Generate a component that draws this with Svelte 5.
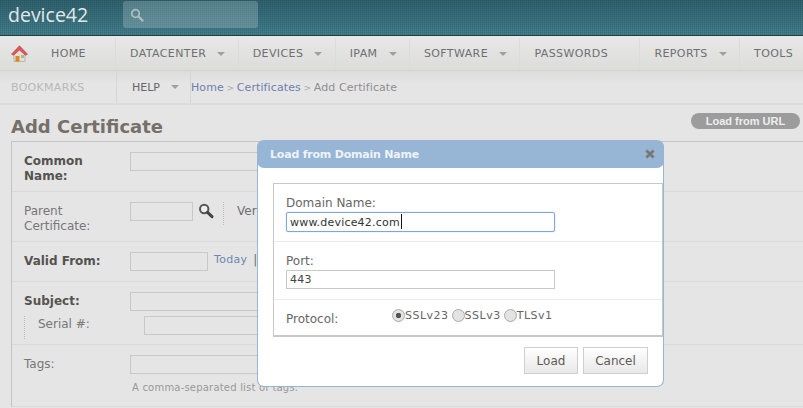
<script>
  const navItems = [
    { label: 'DATACENTER', caret: true },
    { label: 'DEVICES', caret: true },
    { label: 'IPAM', caret: true },
    { label: 'SOFTWARE', caret: true },
    { label: 'PASSWORDS', caret: false },
    { label: 'REPORTS', caret: true },
    { label: 'TOOLS', caret: false }
  ];
  const protocols = ['SSLv23', 'SSLv3', 'TLSv1'];
  let domain = $state('www.device42.com');
  let port = $state('443');
  let protocol = $state('SSLv23');
</script>

<div class="page">
  <header class="topbar">
    <span class="logo">device42</span>
    <div class="search">
      <svg width="14" height="14" viewBox="0 0 14 14">
        <circle cx="5.5" cy="5.5" r="3.8" fill="none" stroke="#a9bcc0" stroke-width="1.8" />
        <path d="M8.4 8.4 L12.6 12.6" stroke="#a9bcc0" stroke-width="2.2" stroke-linecap="round" />
      </svg>
    </div>
  </header>

  <nav class="mainnav">
    <a class="nav-item home">
      <svg class="house" width="17" height="18" viewBox="0 0 17 18">
        <path d="M3 8 V16.5 H14 V8 L8.5 3 Z" fill="#e4e0d6" stroke="#a8a294" stroke-width="0.7" />
        <path d="M0.5 9.2 L8.5 0.8 L16.5 9.2 L14.4 10.2 L8.5 5 L2.6 10.2 Z" fill="#d9565a" stroke="#c0484c" stroke-width="0.7" />
        <rect x="4.5" y="11" width="4" height="5.5" fill="#d98a1e" />
        <rect x="10" y="10" width="3" height="3" fill="#a9b4b4" />
      </svg>
      <span>HOME</span>
      <i class="caret hidden"></i>
    </a>
    {#each navItems as item}
      <a class="nav-item">
        <span>{item.label}</span>
        <i class="caret" class:hidden={!item.caret}></i>
      </a>
    {/each}
  </nav>

  <div class="subnav">
    <a class="sub-item bookmarks">BOOKMARKS</a>
    <a class="sub-item help">HELP <i class="caret"></i></a>
    <div class="crumbs">
      <a>Home</a> <b>&gt;</b> <a>Certificates</a> <b>&gt;</b> <span>Add Certificate</span>
    </div>
  </div>

  <div class="title-row">
    <h1>Add Certificate</h1>
    <button class="pill">Load from URL</button>
  </div>

  <div class="form">
    <div class="row first">
      <label class="strong">Common Name:</label>
      <input class="wide" />
    </div>
    <div class="row second">
      <label>Parent Certificate:</label>
      <input class="short" />
      <svg class="lookup" width="16" height="16" viewBox="0 0 16 16">
        <circle cx="6.2" cy="6" r="4.2" fill="#eee" stroke="#555" stroke-width="2" />
        <path d="M9.6 9.4 L14 13.6" stroke="#444" stroke-width="3" stroke-linecap="round" />
      </svg>
      <span class="ver">Ver</span>
    </div>
    <div class="row third">
      <label class="strong">Valid From:</label>
      <input class="date" />
      <a class="today">Today</a>
      <span class="pipe">|</span>
    </div>
    <div class="row subject">
      <div class="line">
        <label class="strong">Subject:</label>
        <input class="wide" />
      </div>
      <div class="line serial">
        <label>Serial #:</label>
        <input class="wide" />
      </div>
    </div>
    <div class="row tags">
      <div class="line">
        <label>Tags:</label>
        <input class="wide" />
      </div>
      <p class="hint">A comma-separated list of tags.</p>
    </div>
  </div>

  <div class="modal">
    <div class="modal-head">
      <span>Load from Domain Name</span>
      <svg width="10" height="10" viewBox="0 0 10 10">
        <path d="M1.4 1.4 L8.6 8.6 M8.6 1.4 L1.4 8.6" stroke="#777" stroke-width="2.8" />
      </svg>
    </div>
    <div class="modal-box">
      <div class="field domain">
        <label for="domain">Domain Name:</label>
        <input id="domain" class="focus" bind:value={domain} />
        <i class="cursor"></i>
      </div>
      <div class="field port">
        <label for="port">Port:</label>
        <input id="port" bind:value={port} />
      </div>
      <div class="field proto">
        <label>Protocol:</label>
        <div class="radios">
          {#each protocols as p}
            <span class="radio-item">
              <i class="radio" class:on={protocol === p}></i>{p}
            </span>
          {/each}
        </div>
      </div>
    </div>
    <div class="modal-foot">
      <button class="load">Load</button>
      <button class="cancel">Cancel</button>
    </div>
  </div>
</div>

<style>
  :global(body) {
    margin: 0;
    background: #e5e5e5;
  }

  .page {
    position: relative;
    width: 803px;
    height: 408px;
    overflow: hidden;
    background: #e5e5e5;
    color: #6f6f6f;
    font-family: "DejaVu Sans", Verdana, sans-serif;
    font-size: 12px;
  }

  .topbar {
    box-sizing: border-box;
    height: 36px;
    display: flex;
    align-items: center;
    border-bottom: 1px solid #1f3f48;
    background:
      repeating-linear-gradient(90deg, rgba(0, 0, 0, 0.07) 0 1px, transparent 1px 2px),
      repeating-linear-gradient(0deg, rgba(0, 0, 0, 0.07) 0 1px, transparent 1px 2px),
      linear-gradient(#2f6470, #44808f);
  }

  .logo {
    width: 123px;
    padding-left: 8px;
    box-sizing: border-box;
    margin-top: -6px;
    color: #e2e8e8;
    font-family: "Open Sans", sans-serif;
    font-size: 19.5px;
  }

  .search {
    box-sizing: border-box;
    width: 135px;
    height: 27px;
    margin-top: -6px;
    padding: 7px;
    border-radius: 3px;
    background: rgba(255, 255, 255, 0.2);
  }

  .search svg {
    display: block;
  }

  .mainnav {
    display: flex;
    height: 35px;
    box-sizing: border-box;
    border-bottom: 1px solid #d3d2cc;
    background: linear-gradient(#e8e8e8, #dcdcda);
  }

  .nav-item {
    display: flex;
    align-items: center;
    margin: 3px 0 2px;
    padding: 0 12.4px 0 14px;
    border-left: 1px solid #dbdbd9;
    color: #6f6f72;
    font-size: 11px;
    letter-spacing: 0.4px;
    white-space: nowrap;
  }

  .nav-item.home {
    border-left: 0;
    padding-left: 11px;
    padding-right: 10px;
  }

  .house {
    margin-right: 23px;
  }

  .caret {
    display: inline-block;
    width: 0;
    height: 0;
    margin-left: 11px;
    border: 4px solid transparent;
    border-top: 4px solid #a0a0a0;
    border-bottom: 0;
  }

  .caret.hidden {
    visibility: hidden;
  }

  .subnav {
    display: flex;
    height: 34px;
    box-sizing: border-box;
    align-items: center;
    border-bottom: 2px solid #dcdcdc;
    background: linear-gradient(#dcdcdc, #e5e5e5 12px);
    font-size: 11px;
  }

  .sub-item {
    display: flex;
    align-items: center;
    height: 32px;
    box-sizing: border-box;
    border-right: 1px solid #d6d6d6;
    white-space: nowrap;
  }

  .bookmarks {
    width: 117px;
    padding-left: 11px;
    letter-spacing: 0.3px;
    color: #b8b8b8;
  }

  .help {
    width: 74px;
    padding-left: 15px;
    color: #666;
  }

  .help .caret {
    margin-left: 11px;
  }

  .crumbs {
    font-size: 11px;
    letter-spacing: 0.1px;
    color: #8f8f8f;
    white-space: nowrap;
  }

  .crumbs a {
    color: #6f7fae;
  }

  .crumbs b {
    margin: 0 -1px;
    font-weight: normal;
    font-size: 9px;
    color: #aaa;
  }

  .title-row {
    display: flex;
    align-items: center;
    justify-content: space-between;
    height: 36px;
    padding: 0 3px 0 11px;
  }

  h1 {
    margin: 7px 0 0;
    font-size: 18px;
    font-weight: bold;
    color: #76706a;
  }

  .pill {
    width: 109px;
    height: 16px;
    margin-top: -4px;
    padding: 0;
    border: 0;
    border-radius: 8px;
    background: #9c9c9c;
    color: #eee;
    font-family: "Liberation Sans", Arial, sans-serif;
    font-size: 11px;
    font-weight: bold;
  }

  .form {
    margin-left: 11px;
    border-top: 1px solid #c4c4c4;
    border-left: 1px solid #c4c4c4;
  }

  .row {
    box-sizing: border-box;
    display: flex;
    align-items: flex-start;
    padding: 10px 0 0 12px;
    border-bottom: 1px solid #dadada;
  }

  .row.first { height: 50px; }
  .row.second { height: 50px; }
  .row.third { height: 40px; }
  .row.subject { height: 63px; display: block; }
  .row.tags { height: 62px; display: block; }

  .line {
    display: flex;
    align-items: flex-start;
  }

  .serial {
    margin-top: 5px;
    height: 23px;
    border-left: 1px dotted #bbb;
    padding-left: 13px;
  }

  label {
    display: block;
    width: 106px;
    flex: none;
    line-height: 15px;
    color: #777;
  }

  .row label {
    padding-top: 2px;
  }

  .row .serial label {
    padding-top: 1px;
  }

  .strong {
    font-weight: bold;
    color: #55534f;
  }

  input {
    box-sizing: border-box;
    height: 19px;
    padding: 0 3px;
    border: 1px solid #c8c8c8;
    background: transparent;
    color: #333;
    font-family: inherit;
    font-size: 11px;
    letter-spacing: 0.2px;
    outline: none;
  }

  .wide { width: 300px; }
  .short { width: 63px; }
  .date { width: 78px; }

  .lookup {
    margin: 1px 0 0 5px;
  }

  .ver {
    margin-left: 9px;
    padding-left: 13px;
    height: 23px;
    line-height: 18px;
    border-left: 1px dotted #bbb;
  }

  .today {
    margin-left: 6px;
    line-height: 16px;
    font-size: 11px;
    letter-spacing: 0.3px;
    color: #6f86ae;
  }

  .pipe {
    margin-left: 6px;
    line-height: 16px;
  }

  .hint {
    margin: 8px 0 0 108px;
    font-size: 10px;
    letter-spacing: 0.2px;
    color: #999;
  }

  .modal {
    position: absolute;
    left: 257px;
    top: 140px;
    width: 407px;
    height: 247px;
    box-sizing: border-box;
    border: 1px solid #97b5d5;
    border-top: 0;
    border-radius: 7px;
    background: #fff;
  }

  .modal-head {
    display: flex;
    align-items: center;
    justify-content: space-between;
    height: 28px;
    margin: 0 -1px;
    padding: 0 9px 0 13px;
    border-radius: 7px;
    background: #97b5d5;
    color: #eef3f8;
    font-size: 11px;
    letter-spacing: -0.2px;
    font-weight: bold;
  }

  .modal-box {
    margin: 15px 0 0 15px;
    border: 1px solid #c8c8c8;
    border-bottom: 2px solid #c8c8c8;
  }

  .field {
    position: relative;
    box-sizing: border-box;
    padding: 11px 0 0 12px;
    border-bottom: 1px solid #ececec;
  }

  .field.domain { height: 58px; }
  .field.port { height: 58px; }
  .field.proto { height: 35px; border-bottom: 0; display: flex; padding-top: 11px; }

  .field label {
    width: auto;
    color: #666;
    line-height: 17px;
  }

  .field input {
    display: block;
    width: 269px;
    color: #444;
    border-color: #c8c8c8;
  }

  .field input.focus {
    height: 20px;
    border: 1px solid #7da6dc;
    border-radius: 2px;
    box-shadow: 0 0 1px #7da6dc;
    color: #333;
  }

  .cursor {
    position: absolute;
    left: 127px;
    top: 30px;
    width: 1px;
    height: 15px;
    background: #111;
  }

  .proto label {
    width: 106px;
  }

  .radios {
    display: flex;
    gap: 3px;
    margin-top: -4px;
    font-size: 11px;
    letter-spacing: 0.5px;
    color: #666;
  }

  .radio-item {
    display: flex;
    align-items: center;
    height: 16px;
  }

  .radio {
    box-sizing: border-box;
    width: 13px;
    height: 13px;
    border: 1px solid #aaa;
    border-radius: 50%;
    background: #e3e3e3;
  }

  .radio.on {
    background: radial-gradient(circle, #555 0 2.5px, #e3e3e3 3px);
  }

  .modal-foot {
    display: flex;
    justify-content: flex-end;
    gap: 5px;
    margin-top: 10px;
    padding-right: 15px;
  }

  .modal-foot button {
    height: 27px;
    padding: 0;
    border: 1px solid #cfcfcf;
    background: linear-gradient(#fff, #e8e8e8);
    color: #5f5a55;
    font-family: inherit;
    font-size: 12px;
  }

  .modal-foot .load { width: 54px; }
  .modal-foot .cancel { width: 65px; }
</style>
